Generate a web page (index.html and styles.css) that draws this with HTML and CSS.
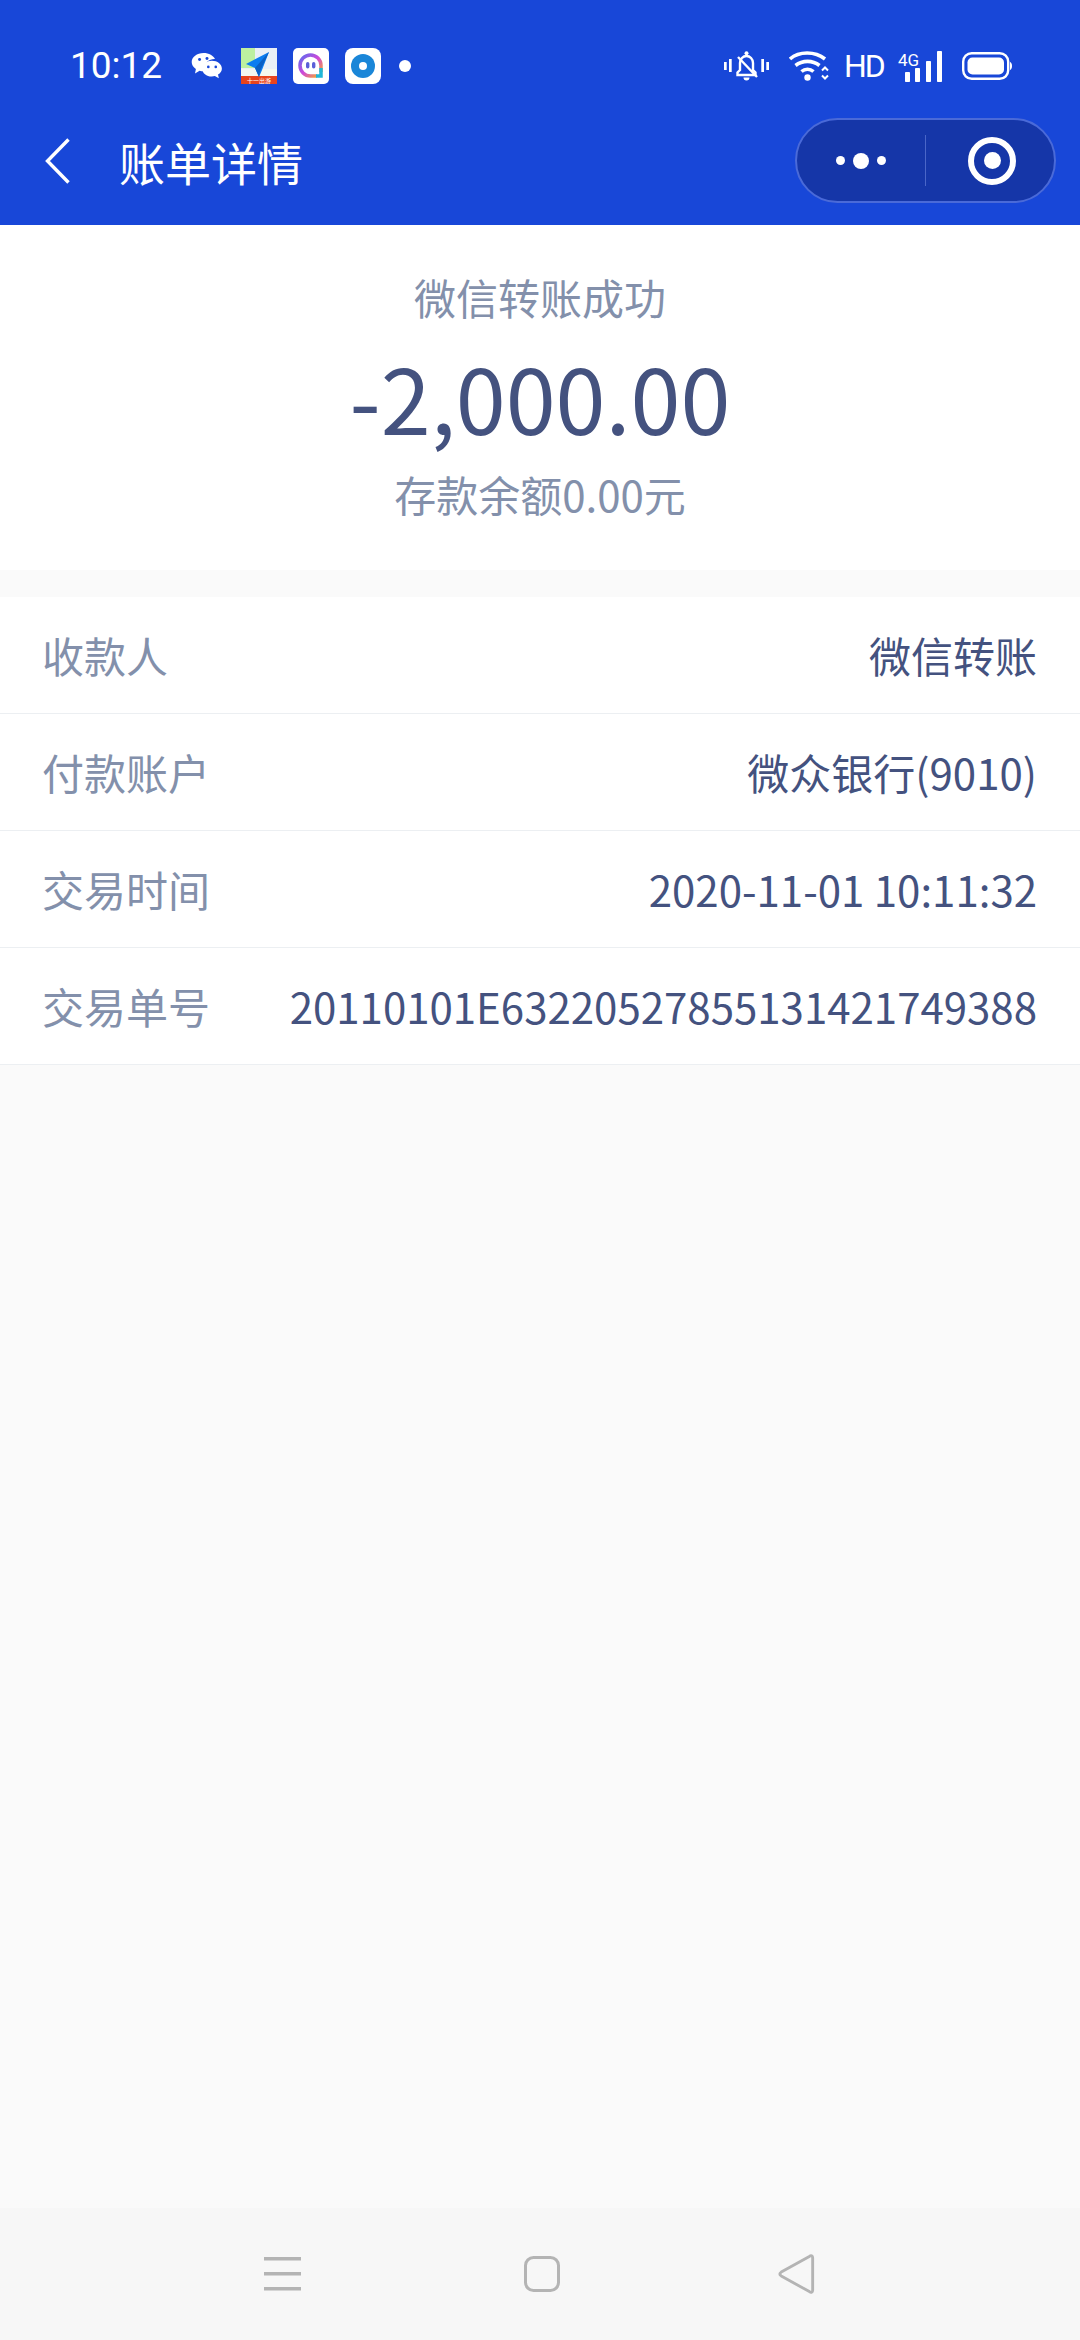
FILE: index.html
```html
<!DOCTYPE html>
<html lang="zh">
<head>
<meta charset="utf-8">
<title>账单详情</title>
<link rel="stylesheet" href="styles.css">
</head>
<body>
<div class="page">
  <header class="header">
    <div class="status">
      <div class="status-left">
        <span class="time">10:12</span>
        <svg class="ic-wechat" width="32" height="28" viewBox="0 0 36 32">
          <path fill="#fff" d="M14 1C6.500 1 .5 5.700.5 11.500c0 3.300 1.900 6.100 4.800 8l-1 5 5.200-3c1.500.4 3 .6 4.500.6 .6 0 1.200 0 1.800-.1-.5-1.200-.8-2.400-.8-3.700 0-5.800 5.300-10.300 11.500-10.300h.6C25.500 4 20.200 1 14 1z"/>
          <path fill="#fff" d="M23.500 10C17.400 10 12.500 14 12.500 19s4.900 9 11 9c1.200 0 2.400-.2 3.500-.5l4.500 2.500-.9-4.200c2.700-1.700 4.400-4.200 4.400-6.800 0-5-5-9-11.500-9z"/>
          <circle cx="9.500" cy="8.500" r="1.700" fill="#1847d8"/><circle cx="18" cy="7.500" r="1.700" fill="#1847d8"/>
          <circle cx="19.500" cy="17" r="1.500" fill="#1847d8"/><circle cx="28" cy="17" r="1.500" fill="#1847d8"/>
        </svg>
        <svg class="ic-app" width="36" height="36" viewBox="0 0 36 36">
          <rect width="36" height="36" fill="#e9eff6"/>
          <rect width="14" height="20" fill="#bdf0a0"/>
          <rect y="21" width="36" height="8" fill="#f4f7f0"/>
          <rect y="28" width="36" height="8" fill="#e8431c"/>
          <path fill="#0b7cf0" d="M28 4 5 16l9 4 4 9 3-7z"/>
          <path fill="#0a5fc4" d="M28 4 14 20l4 9 1-6z"/>
          <text x="18" y="35" class="mini">十一出游</text>
        </svg>
        <svg class="ic-app" width="36" height="36" viewBox="0 0 36 36">
          <defs><linearGradient id="ga" x1="0" y1="0" x2="1" y2="1"><stop offset="0" stop-color="#5a6cf0"/><stop offset=".5" stop-color="#d048d8"/><stop offset="1" stop-color="#f8b020"/></linearGradient></defs>
          <rect width="36" height="36" rx="5" fill="#fff"/>
          <path fill="none" stroke="url(#ga)" stroke-width="3.500" d="M24 28H17.500A10.500 10.500 0 1 1 28 17.500V24"/>
          <path fill="none" stroke="#1fb6d8" stroke-width="3.500" d="M28 20V28H23"/>
          <rect x="13" y="14" width="3.400" height="6.500" rx="1.700" fill="#5b5fd8"/><rect x="19" y="14" width="3.400" height="6.500" rx="1.700" fill="#5b5fd8"/>
        </svg>
        <svg class="ic-app" width="36" height="36" viewBox="0 0 36 36">
          <rect width="36" height="36" rx="8" fill="#fff"/>
          <circle cx="18" cy="18" r="12" fill="#1a86d8"/>
          <circle cx="18" cy="18" r="4" fill="#fff"/>
        </svg>
        <span class="dot"></span>
      </div>
      <div class="status-right">
        <svg width="45" height="32" viewBox="0 0 45 32" class="ic-bell">
          <g fill="none" stroke="#fff" stroke-width="2.400">
            <path d="M13.500 25V22.500l2.500-2.500v-7c0-4 3-7 6.500-7s6.500 3 6.500 7v7l2.500 2.500V25z"/>
            <path d="M14 7 33 27"/>
          </g>
          <circle cx="22.500" cy="3.200" r="2" fill="#fff"/>
          <path fill="#fff" d="M19.500 27.500h6a3 3 0 0 1-6 0zM0 12h2.700v8H0zM5 9h2.700v13H5zM37.300 9H40v13h-2.700zM42.300 12H45v8h-2.700z"/>
        </svg>
        <svg width="40" height="32" viewBox="0 0 40 32" class="ic-wifi">
          <g fill="none" stroke="#fff" stroke-width="3.600">
            <path d="M1 9C10 1 26 1 36 9"/>
            <path d="M6.500 15.500c7-5.500 17-5.500 24 0"/>
            <path d="M12.500 21.500c3.500-3 8.500-3 12 0"/>
          </g>
          <circle cx="18.500" cy="27.500" r="3.200" fill="#fff"/>
          <path fill="none" stroke="#fff" stroke-width="2" d="M33 20.500l3-3 3 3M33 25.500l3 3 3-3"/>
        </svg>
        <span class="hd">HD</span>
        <svg width="44" height="31" viewBox="0 0 44 31" class="ic-signal">
          <text x="0" y="15" class="net">4G</text>
          <rect x="7" y="21" width="5" height="10" rx=".8" fill="#fff"/>
          <rect x="17" y="17" width="5" height="14" rx=".8" fill="#fff"/>
          <rect x="28" y="10" width="5" height="21" rx=".8" fill="#fff"/>
          <rect x="39" y="0" width="5" height="31" rx=".8" fill="#fff"/>
        </svg>
        <svg width="50" height="28" viewBox="0 0 50 28" class="ic-battery">
          <rect x="1.200" y="1.200" width="45" height="25.600" rx="8.500" fill="none" stroke="#fff" stroke-width="2.400"/>
          <rect x="5.500" y="5.500" width="36.500" height="17" rx="5" fill="#fff"/>
          <path fill="#fff" d="M48 10c1.300.5 2 2 2 4s-.7 3.500-2 4z"/>
        </svg>
      </div>
    </div>
    <div class="nav">
      <svg class="back" width="25" height="46" viewBox="0 0 25 46"><path fill="none" stroke="#fff" stroke-width="3.400" d="M23.500 1.500 2.500 23l21 21.500"/></svg>
      <h1 class="title">账单详情</h1>
      <div class="capsule">
        <div class="cap-more"><i class="d-s"></i><i class="d-l"></i><i class="d-s"></i></div>
        <div class="cap-sep"></div>
        <div class="cap-close"><i class="ring"></i></div>
      </div>
    </div>
  </header>

  <section class="summary">
    <div class="sum-title">微信转账成功</div>
    <div class="amount">-2,000.00</div>
    <div class="balance">存款余额0.00元</div>
  </section>

  <section class="list">
    <div class="row"><span class="label">收款人</span><span class="value">微信转账</span></div>
    <div class="row"><span class="label">付款账户</span><span class="value">微众银行(9010)</span></div>
    <div class="row"><span class="label">交易时间</span><span class="value">2020-11-01 10:11:32</span></div>
    <div class="row"><span class="label">交易单号</span><span class="value">20110101E63220527855131421749388</span></div>
  </section>

  <div class="spacer"></div>

  <footer class="sysnav">
    <svg class="nav-menu" width="38" height="34" viewBox="0 0 38 34"><path fill="#b4b4b4" d="M0 0h37v3.500H0zM0 15h37v3.500H0zM0 30h37v3.500H0z"/></svg>
    <svg class="nav-home" width="36" height="36" viewBox="0 0 36 36"><rect x="1.500" y="1.500" width="33" height="33" rx="8" fill="none" stroke="#b4b4b4" stroke-width="3"/></svg>
    <svg class="nav-back" width="38" height="40" viewBox="0 0 38 42"><path fill="none" stroke="#b4b4b4" stroke-width="3" stroke-linejoin="round" d="M33 2.500c2-1.300 3.500-.5 3.500 1.500v34c0 2-1.500 2.800-3.500 1.500L3.500 23c-2-1.300-2-2.700 0-4z"/></svg>
  </footer>
</div>
</body>
</html>
```

FILE: styles.css
```css
* { box-sizing: border-box; margin: 0; padding: 0; }
html, body { width: 1080px; height: 2340px; overflow: hidden; }
body { font-family: "Noto Sans CJK SC", "Noto Sans", sans-serif; background: #fafafa; }
.page { width: 1080px; height: 2340px; display: flex; flex-direction: column; }

.header { height: 225px; background: #1847d8; color: #fff; flex: none; }
.status { height: 118px; display: flex; justify-content: space-between; align-items: flex-start; padding: 47px 68px 0 70px; }
.status-left { display: flex; align-items: center; height: 38px; }
.status-right { display: flex; align-items: center; height: 38px; }
.time { font-family: "Roboto", sans-serif; font-size: 37px; font-weight: 400; line-height: 38px; width: 121px; }
.ic-wechat { margin-right: 18px; }
.ic-app { margin-right: 16px; }
.dot { width: 12px; height: 12px; border-radius: 50%; background: #fff; margin-left: 2px; }
.mini { font-size: 6px; fill: #fff; text-anchor: middle; font-family: "Noto Sans CJK SC", sans-serif; }
.ic-bell { margin-right: 20px; }
.ic-wifi { margin-right: 15px; }
.hd { font-family: "Roboto", sans-serif; font-size: 32px; line-height: 38px; width: 38px; margin-right: 16px; white-space: nowrap; letter-spacing: -2px; }
.ic-signal { margin-right: 20px; overflow: visible; }
.net { font-family: "Roboto", sans-serif; font-size: 17px; font-weight: 400; fill: #fff; }

.nav { height: 85px; display: flex; align-items: center; padding: 0 24px 0 45px; }
.back { margin-right: 49px; }
.title { font-size: 46px; font-weight: 400; line-height: 60px; flex: 1; }
.capsule { width: 261px; height: 85px; border-radius: 43px; background: #1536a8; border: 2px solid #4a6ad8; display: flex; align-items: center; }
.cap-more { width: 128px; display: flex; justify-content: center; align-items: center; gap: 8px; }
.d-s { width: 9px; height: 9px; border-radius: 50%; background: #fff; }
.d-l { width: 16px; height: 16px; border-radius: 50%; background: #fff; }
.cap-sep { width: 1px; height: 51px; background: #4a66c8; }
.cap-close { flex: 1; display: flex; justify-content: center; padding-left: 4px; }
.ring { width: 48px; height: 48px; border-radius: 50%; border: 6px solid #fff; display: flex; align-items: center; justify-content: center; }
.ring::after { content: ""; width: 17px; height: 17px; border-radius: 50%; background: #fff; }

.summary { height: 345px; background: #fff; flex: none; text-align: center; }
.sum-title { font-size: 42px; line-height: 60px; color: #8390ab; padding-top: 42px; height: 102px; }
.amount { font-size: 90px; line-height: 110px; color: #44527f; margin-top: 14px; }
.balance { font-size: 42px; line-height: 56px; color: #8390ab; margin-top: 15px; }

.list { margin-top: 27px; background: #fff; flex: none; }
.row { height: 117px; padding: 0 43px 0 42px; border-bottom: 1px solid #eceff2; display: flex; justify-content: space-between; align-items: center; }
.label { font-size: 42px; color: #8390ab; line-height: 60px; }
.value { font-size: 42px; color: #44527f; line-height: 60px; }

.spacer { flex: 1; }
.sysnav { height: 132px; background: #f7f7f7; flex: none; display: flex; align-items: center; }
.sysnav svg { flex: none; }
.nav-menu { margin-left: 264px; }
.nav-home { margin-left: 222px; }
.nav-back { margin-left: 217px; }
```
